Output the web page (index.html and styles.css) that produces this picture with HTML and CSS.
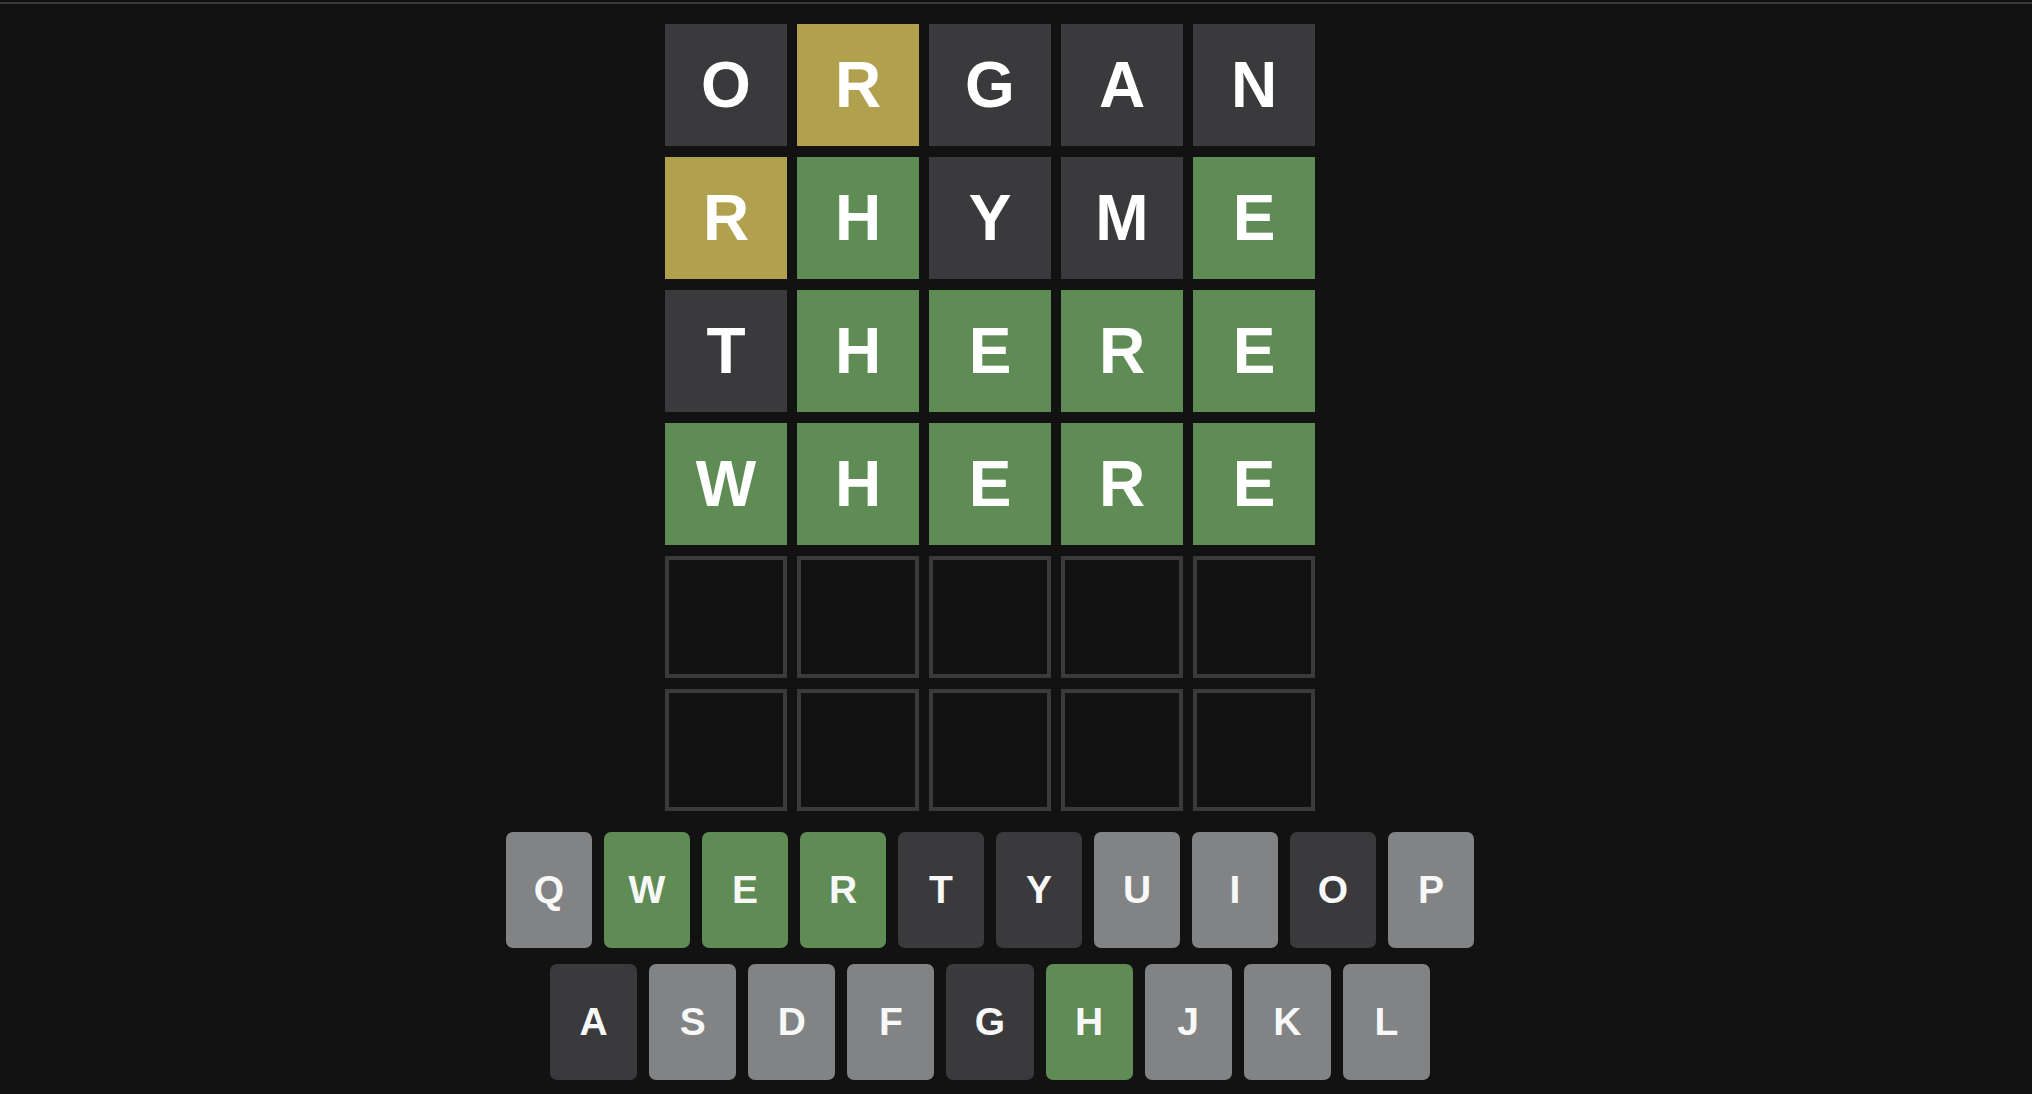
FILE: index.html
```html
<!DOCTYPE html>
<html lang="en">
<head>
<meta charset="utf-8">
<title>Wordle</title>
<link rel="stylesheet" href="styles.css">
</head>
<body>
<div class="topbar"></div>
<main class="app">
  <div class="board">
    <div class="tile absent">O</div><div class="tile present">R</div><div class="tile absent">G</div><div class="tile absent">A</div><div class="tile absent">N</div>
    <div class="tile present">R</div><div class="tile correct">H</div><div class="tile absent">Y</div><div class="tile absent">M</div><div class="tile correct">E</div>
    <div class="tile absent">T</div><div class="tile correct">H</div><div class="tile correct">E</div><div class="tile correct">R</div><div class="tile correct">E</div>
    <div class="tile correct">W</div><div class="tile correct">H</div><div class="tile correct">E</div><div class="tile correct">R</div><div class="tile correct">E</div>
    <div class="tile empty"></div><div class="tile empty"></div><div class="tile empty"></div><div class="tile empty"></div><div class="tile empty"></div>
    <div class="tile empty"></div><div class="tile empty"></div><div class="tile empty"></div><div class="tile empty"></div><div class="tile empty"></div>
  </div>
  <div class="keyboard">
    <div class="krow">
      <button class="key">Q</button><button class="key k-correct">W</button><button class="key k-correct">E</button><button class="key k-correct">R</button><button class="key k-absent">T</button><button class="key k-absent">Y</button><button class="key">U</button><button class="key">I</button><button class="key k-absent">O</button><button class="key">P</button>
    </div>
    <div class="krow krow-2">
      <button class="key k-absent">A</button><button class="key">S</button><button class="key">D</button><button class="key">F</button><button class="key k-absent">G</button><button class="key k-correct">H</button><button class="key">J</button><button class="key">K</button><button class="key">L</button>
    </div>
  </div>
</main>
</body>
</html>
```

FILE: styles.css
```css
html, body {
  margin: 0;
  padding: 0;
  background: #121212;
  height: 100%;
  overflow: hidden;
}

.topbar {
  margin-top: 2px;
  height: 2px;
  background: #3a3a3c;
}

.app {
  display: flex;
  flex-direction: column;
  align-items: center;
  padding-right: 52px;
  font-family: "Liberation Sans", Arial, sans-serif;
}

.board {
  margin-top: 20px;
  display: grid;
  grid-template-columns: repeat(5, 122px);
  grid-auto-rows: 122px;
  column-gap: 10px;
  row-gap: 11px;
}

.tile {
  box-sizing: border-box;
  display: flex;
  align-items: center;
  justify-content: center;
  color: #ffffff;
  font-size: 64px;
  font-weight: 700;
  line-height: 1;
}

.absent { background: #3a3a3c; }
.present { background: #b1a04e; }
.correct { background: #5f8b55; }
.empty { border: 4px solid #3a3a3c; }

.keyboard {
  margin-top: 21px;
  width: 968px;
  display: flex;
  flex-direction: column;
  gap: 16px;
}

.krow {
  display: flex;
  gap: 12px;
}

.krow-2 {
  padding: 0 44px;
}

.key {
  flex: 1;
  height: 116px;
  border: 0;
  border-radius: 7px;
  background: #818384;
  color: #f8f8f8;
  font-family: "Liberation Sans", Arial, sans-serif;
  font-size: 39px;
  font-weight: 700;
  padding: 0;
  display: flex;
  align-items: center;
  justify-content: center;
}

.k-absent { background: #3a3a3c; }
.k-correct { background: #5f8b55; }
```
